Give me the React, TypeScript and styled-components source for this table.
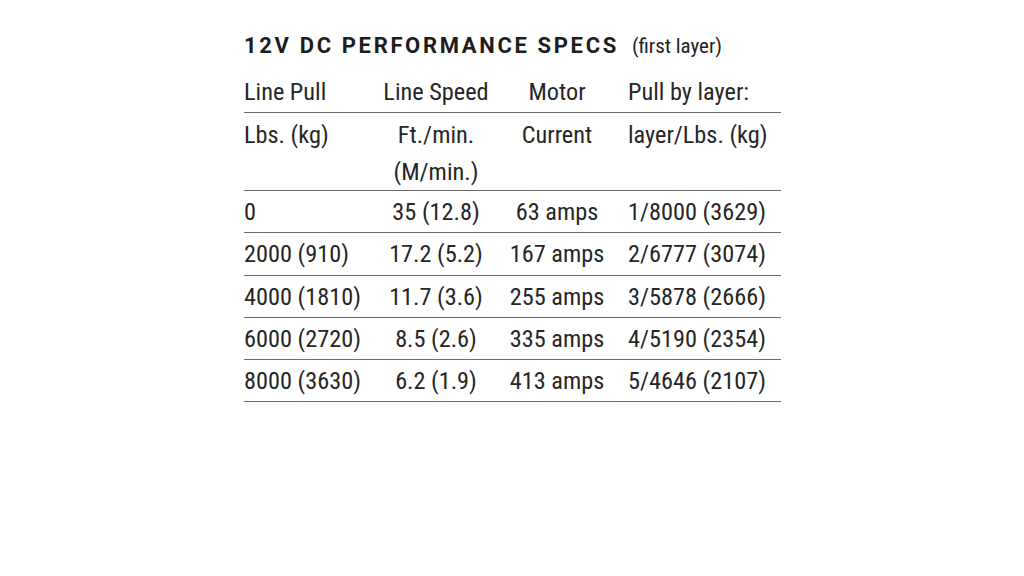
import React from 'react';
import styled, { createGlobalStyle } from 'styled-components';

const Global = createGlobalStyle`
  body {
    margin: 0;
    background: #fff;
    font-family: "Roboto Condensed", Roboto, sans-serif;
    color: #262626;
  }
`;

const Page = styled.div`
  padding: 33px 0 0 244px;
`;

const Sheet = styled.div`
  width: 537px;
`;

const TitleRow = styled.div`
  display: flex;
  align-items: baseline;
  height: 38px;
  white-space: nowrap;
`;

const Title = styled.h2`
  margin: 0;
  font-family: Roboto, "Liberation Sans", sans-serif;
  font-weight: 700;
  font-size: 22px;
  letter-spacing: 2.65px;
  color: #1d1d1d;
`;

const Note = styled.span`
  margin-left: 13px;
  font-size: 21px;
  color: #222;
`;

const Row = styled.div<{ $tall?: boolean }>`
  display: grid;
  grid-template-columns: 132px 120px 122px 1fr;
  box-sizing: border-box;
  height: ${p => (p.$tall ? '78px' : '42.2px')};
  padding-top: ${p => (p.$tall ? '3px' : '0')};
  align-items: ${p => (p.$tall ? 'start' : 'center')};
  border-bottom: 1.5px solid #6d6d6d;
  font-size: 24.3px;
  line-height: 37px;
  white-space: nowrap;
`;

const Cell = styled.div<{ $align: 'left' | 'center' }>`
  text-align: ${p => p.$align};
`;

const LayerCell = styled.div`
  padding-left: 10px;
`;

const rows = [
  ['0', '35 (12.8)', '63 amps', '1/8000 (3629)'],
  ['2000 (910)', '17.2 (5.2)', '167 amps', '2/6777 (3074)'],
  ['4000 (1810)', '11.7 (3.6)', '255 amps', '3/5878 (2666)'],
  ['6000 (2720)', '8.5 (2.6)', '335 amps', '4/5190 (2354)'],
  ['8000 (3630)', '6.2 (1.9)', '413 amps', '5/4646 (2107)'],
];

export default function App() {
  return (
    <>
      <Global />
      <Page>
        <Sheet>
          <TitleRow>
            <Title>12V DC PERFORMANCE SPECS</Title>
            <Note>(first layer)</Note>
          </TitleRow>
          <Row>
            <Cell $align="left">Line Pull</Cell>
            <Cell $align="center">Line Speed</Cell>
            <Cell $align="center">Motor</Cell>
            <LayerCell>Pull by layer:</LayerCell>
          </Row>
          <Row $tall>
            <Cell $align="left">Lbs. (kg)</Cell>
            <Cell $align="center">
              Ft./min.
              <br />
              (M/min.)
            </Cell>
            <Cell $align="center">Current</Cell>
            <LayerCell>layer/Lbs. (kg)</LayerCell>
          </Row>
          {rows.map(r => (
            <Row key={r[0]}>
              <Cell $align="left">{r[0]}</Cell>
              <Cell $align="center">{r[1]}</Cell>
              <Cell $align="center">{r[2]}</Cell>
              <LayerCell>{r[3]}</LayerCell>
            </Row>
          ))}
        </Sheet>
      </Page>
    </>
  );
}
